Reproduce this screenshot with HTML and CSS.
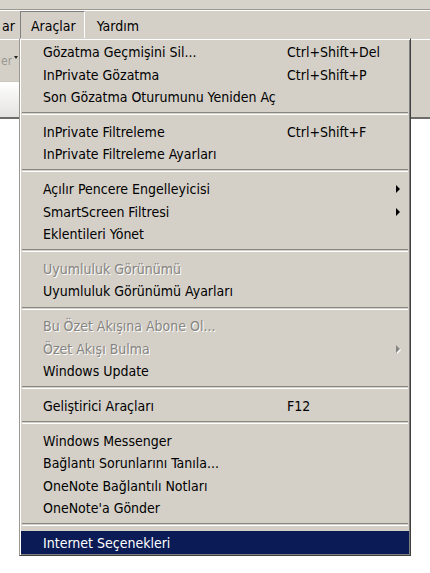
FILE: index.html
```html
<html lang="tr">
<head>
  <meta charset="UTF-8" />
  <meta name="viewport" content="width=device-width, initial-scale=1.0" />
  <title>Araçlar</title>
  <link rel="stylesheet" href="styles.css">
</head>
<body>
  <!-- Üst şerit (adres çubuğunun alt kısmı) -->
  <div class="topstrip"></div>

  <!-- Menü çubuğu -->
  <div class="menubar">
    <span class="mb-item cut">ar</span>
    <span class="mb-item open">Araçlar</span>
    <span class="mb-item">Yardım</span>
  </div>

  <!-- Araç çubuğu ve sekme -->
  <div class="toolbar">
    <div class="tb-left"><span class="tb-label">er</span><span class="tb-caret"></span></div>
    <div class="tab"></div>
  </div>

  <div class="content"></div>

  <!-- Açılan Araçlar menüsü -->
  <div class="menu">
    <div class="item"><span>Gözatma Geçmişini Sil...</span><span>Ctrl+Shift+Del</span></div>
    <div class="item"><span>InPrivate Gözatma</span><span>Ctrl+Shift+P</span></div>
    <div class="item"><span>Son Gözatma Oturumunu Yeniden Aç</span></div>
    <div class="sep"></div>
    <div class="item"><span>InPrivate Filtreleme</span><span>Ctrl+Shift+F</span></div>
    <div class="item"><span>InPrivate Filtreleme Ayarları</span></div>
    <div class="sep"></div>
    <div class="item"><span>Açılır Pencere Engelleyicisi</span><span></span><span class="arrow"></span></div>
    <div class="item"><span>SmartScreen Filtresi</span><span></span><span class="arrow"></span></div>
    <div class="item"><span>Eklentileri Yönet</span></div>
    <div class="sep"></div>
    <div class="item disabled"><span>Uyumluluk Görünümü</span></div>
    <div class="item"><span>Uyumluluk Görünümü Ayarları</span></div>
    <div class="sep"></div>
    <div class="item disabled"><span>Bu Özet Akışına Abone Ol...</span></div>
    <div class="item disabled"><span>Özet Akışı Bulma</span><span></span><span class="arrow"></span></div>
    <div class="item"><span>Windows Update</span></div>
    <div class="sep"></div>
    <div class="item"><span>Geliştirici Araçları</span><span>F12</span></div>
    <div class="sep"></div>
    <div class="item"><span>Windows Messenger</span></div>
    <div class="item"><span>Bağlantı Sorunlarını Tanıla...</span></div>
    <div class="item"><span>OneNote Bağlantılı Notları</span></div>
    <div class="item"><span>OneNote'a Gönder</span></div>
    <div class="sep"></div>
    <div class="item selected"><span>Internet Seçenekleri</span></div>
  </div>
</body>
</html>
```

FILE: styles.css
```css
/* Genel */
body {
  margin: 0;
  padding: 0;
  background: #fff;
  font-family: "DejaVu Sans", sans-serif;
  font-stretch: condensed;
  font-size: 14px;
  color: #000;
  position: relative;
  height: 573px;
  overflow: hidden;
}
/* Üst şerit */
.topstrip {
  height: 9px;
  background: #d6d3cb;
  border-bottom: 1px solid #9c9890;
  box-shadow: 0 1px 0 #fff;
  margin-bottom: 1px;
}
/* Menü çubuğu */
.menubar {
  height: 28px;
  background: #d4d0c8;
  border-bottom: 1px solid #fff;
  display: flex;
  align-items: stretch;
}
.mb-item {
  display: flex;
  align-items: center;
  padding: 2px 12px 0;
  height: 27px;
  box-sizing: border-box;
}
.mb-item.cut {
  padding: 2px 5px 0 2px;
}
.mb-item.open {
  padding: 1px 8px 0 10px;
  border-top: 1px solid #808080;
  border-left: 1px solid #808080;
  border-right: 1px solid #fff;
  height: 28px;
}
/* Araç çubuğu */
.toolbar {
  height: 77px;
  background: #d4d0c8;
  border-bottom: 2px solid #6e6c68;
  display: flex;
  flex-direction: column;
}
.tb-left {
  height: 41px;
  display: flex;
  align-items: center;
  gap: 2px;
  padding-left: 1px;
}
.tb-label {
  color: #9a9892;
  font-size: 12px;
}
.tb-caret {
  width: 0;
  height: 0;
  border-left: 2px solid transparent;
  border-right: 2px solid transparent;
  border-top: 3px solid #222;
  margin-top: -6px;
}
.tab {
  width: 120px;
  flex: 1;
  background: linear-gradient(#ffffff, #e4e3e0);
  border-top: 1px solid #c8c6c0;
}
/* Menü */
.menu {
  position: absolute;
  left: 19px;
  top: 38px;
  width: 392px;
  box-sizing: border-box;
  padding: 1px;
  background: #d4d0c8;
  border-left: 1px solid #9c9890;
  border-top: 1px solid #d4d0c8;
  border-right: 1px solid #404040;
  border-bottom: 1px solid #404040;
  box-shadow: inset 1px 1px 0 #fff, inset -1px -1px 0 #808080;
}
.item {
  display: grid;
  grid-template-columns: 244px 1fr 14px;
  align-items: center;
  box-sizing: border-box;
  height: 22.5px;
  line-height: 20.5px;
  padding: 2px 9px 0 22px;
  white-space: nowrap;
}
.item.disabled {
  color: #868480;
  text-shadow: 1px 1px 0 #fff;
}
.item.selected {
  background: #0b1b56;
  color: #fff;
}
.arrow {
  justify-self: end;
  width: 0;
  height: 0;
  border-top: 4px solid transparent;
  border-bottom: 4px solid transparent;
  border-left: 4px solid #000;
}
.item.disabled .arrow {
  border-left-color: #868480;
  filter: drop-shadow(1px 1px 0 #fff);
}
/* Ayraç çizgisi */
.sep {
  height: 12.3px;
  display: flex;
  align-items: center;
  padding: 0 1px;
}
.sep::before {
  content: "";
  flex: 1;
  height: 1px;
  border-top: 1px solid #8a8782;
  border-bottom: 1px solid #fff;
}
```
